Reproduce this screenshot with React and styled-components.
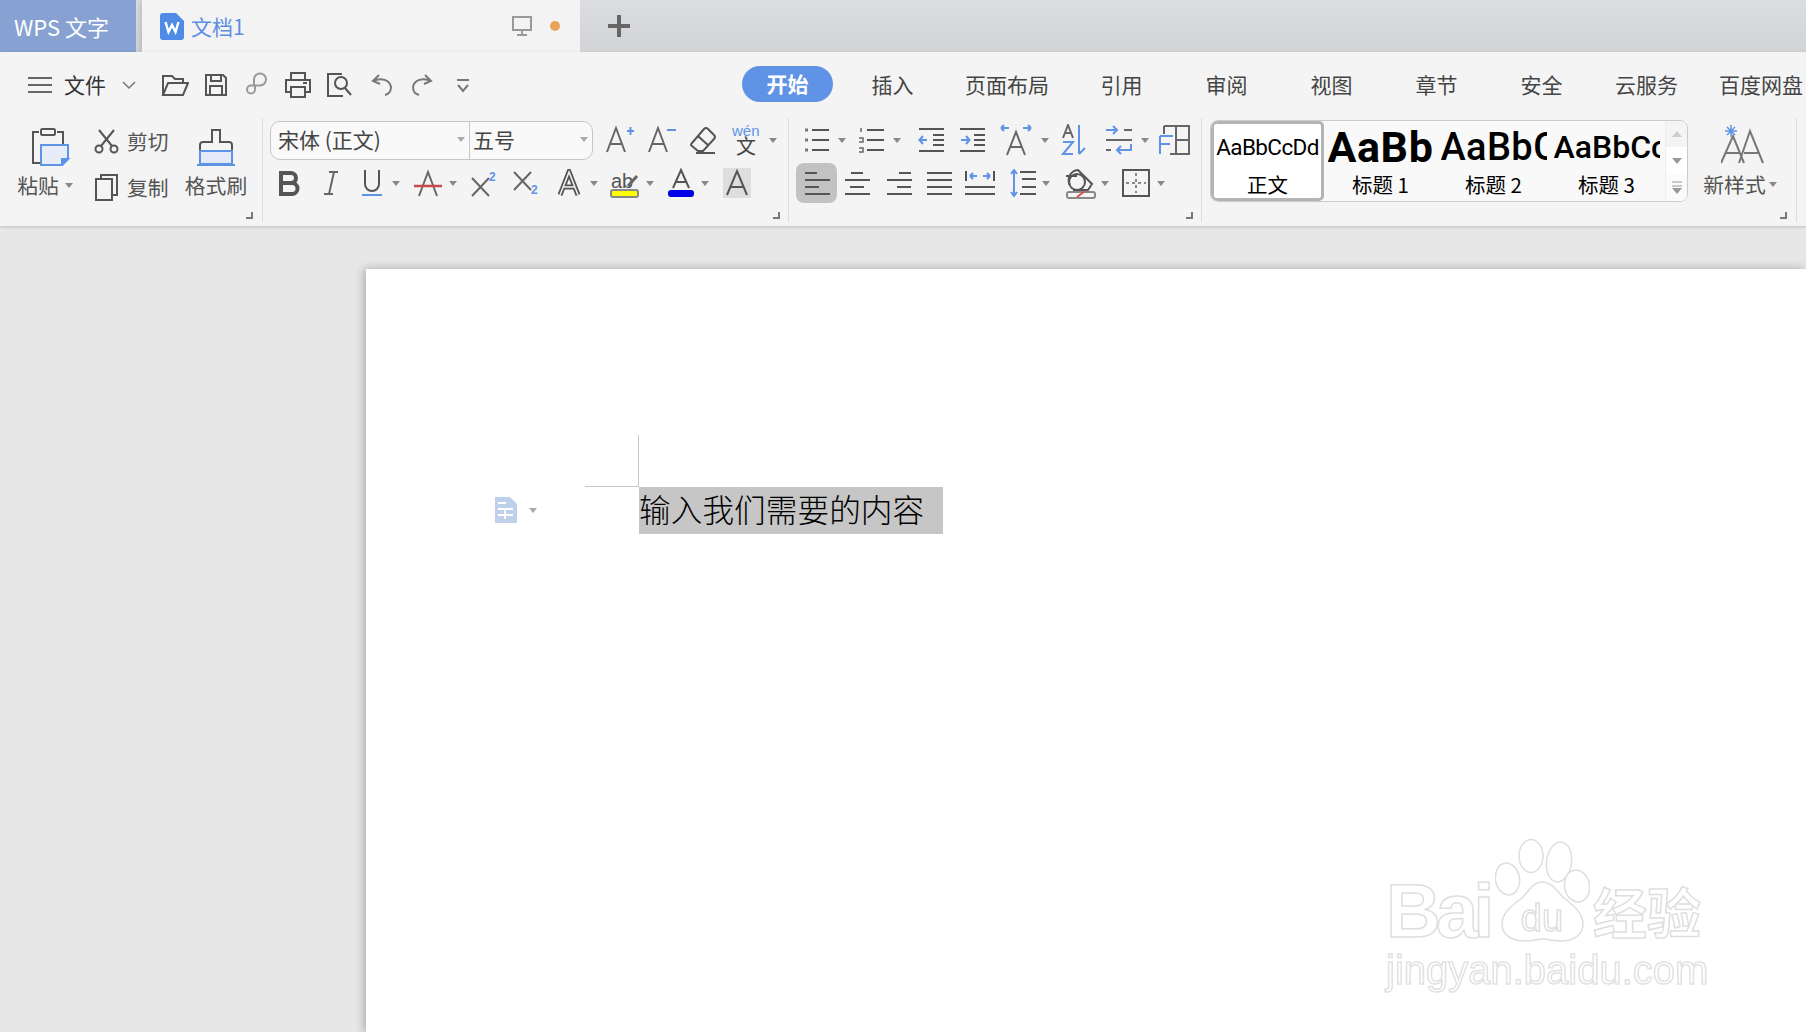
import React from 'react'
import styled, { createGlobalStyle } from 'styled-components'

const BLUE = '#5f93e6'
const CJK = '"Noto Sans CJK SC", "Noto Sans", sans-serif'

const GlobalStyle = createGlobalStyle`
  html, body { margin:0; height:100%; overflow:hidden; }
  #root { height:100%; }
  body { font-family:${CJK}; color:#444; }
`

const Shell = styled.div`
  height:100vh; display:flex; flex-direction:column; overflow:hidden;
`

/* title bar */
const TitleBar = styled.div`
  height:52px; flex:none; display:flex; align-items:stretch;
  background:linear-gradient(#dcdde0, #d2d3d5);
`
const AppTab = styled.div`
  width:136px; flex:none; display:flex; align-items:center; padding-left:14px; box-sizing:border-box;
  background:#87a2d2; color:#fff; font-size:22px; white-space:nowrap;
`
const DocTab = styled.div`
  width:438px; flex:none; margin-left:6px; display:flex; align-items:center; box-sizing:border-box;
  padding:0 20px 0 18px; background:#f3f3f3; box-shadow:-3px 0 4px rgba(0,0,0,.1);
`
const DocName = styled.span`
  color:#5b8ee6; font-size:21px; margin-left:7px; flex:1;
`
const UnsavedDot = styled.span`
  width:10px; height:10px; border-radius:50%; background:#e8a35c; margin-left:18px;
`
const NewTab = styled.div`
  margin-left:28px; display:flex; align-items:center;
`

/* ribbon */
const Ribbon = styled.div`
  height:174px; flex:none; display:flex; flex-direction:column; background:#f4f4f4;
  box-shadow:0 1px 3px rgba(0,0,0,.18); position:relative; z-index:1;
`
const MenuRow = styled.div`
  height:66px; flex:none; display:flex; align-items:center;
`
const QuickBar = styled.div`
  width:735px; flex:none; display:flex; align-items:center; padding-left:22px; box-sizing:border-box;
`
const QuickCell = styled.div`
  width:${p => p.$w}px; flex:none; display:flex; align-items:center; justify-content:center;
  margin-right:${p => p.$mr || 0}px;
`
const FileLabel = styled.span`
  font-size:21px; color:#333; width:50px; margin-left:2px; padding-bottom:2px; text-align:center; flex:none;
`
const TabCell = styled.div`
  min-width:105px; padding:0 20px 2px; box-sizing:border-box; flex:none; display:flex; justify-content:center;
  font-size:21px; color:#444; white-space:nowrap;
`
const ActivePill = styled.span`
  width:91px; height:36px; flex:none; margin:0 -13px; border-radius:18px; background:${BLUE}; color:#fff; font-weight:700;
  display:flex; align-items:center; justify-content:center; padding-bottom:2px; box-sizing:border-box;
`
const ToolRow = styled.div`
  height:104px; flex:none; display:flex;
`
const Group = styled.div`
  width:${p => p.$w}px; flex:none; box-sizing:border-box; display:flex; padding-left:${p => p.$pad || 0}px;
  border-right:1px solid #dcdcdc;
`
const Launcher = styled.i`
  display:block; width:7px; height:7px; flex:none; box-sizing:border-box; align-self:flex-end;
  margin-left:auto; margin-right:${p => p.$mr}px; margin-bottom:3px;
  border-right:2px solid #777; border-bottom:2px solid #777;
`
const BigButton = styled.div`
  width:${p => p.$w}px; flex:none; display:flex; flex-direction:column; align-items:center; padding-top:6px; box-sizing:border-box;
  margin-right:${p => p.$mr || 0}px;
`
const BigIconSlot = styled.div`
  height:46px; display:flex; align-items:center; justify-content:center; margin-left:${p => p.$ml || 0}px;
`
const BigLabel = styled.span`
  font-size:20.8px; color:#555; display:flex; align-items:center; white-space:nowrap; line-height:30px;
  margin-top:${p => p.$mt || 0}px;
`
const MiniStack = styled.div`
  width:${p => p.$w}px; flex:none; margin-left:18px; display:flex; flex-direction:column; gap:6px; padding-top:3px; box-sizing:border-box;
`
const MiniRow = styled.div`
  height:40px; display:flex; align-items:center; gap:8px;
  font-size:20.8px; color:#555; white-space:nowrap;
`
const Stack = styled.div`
  display:flex; flex-direction:column; gap:3px; padding-top:2px; margin-right:-30px;
`
const Row = styled.div`
  height:40px; display:flex; align-items:center;
`
const Tool = styled.div`
  width:${p => p.$w}px; height:40px; flex:none; display:flex; align-items:center; justify-content:center;
  margin-left:${p => p.$ml || 0}px; border-radius:8px;
  background:${p => (p.$active ? '#c2c2c2' : 'transparent')};
`
const Caret = styled.span`
  width:${p => p.$w || 8}px; flex:none; display:flex; align-items:center; margin-left:${p => p.$ml || 0}px;
  &::before { content:''; border-top:5px solid ${p => p.$light ? '#aaa' : '#888'}; border-left:4px solid transparent; border-right:4px solid transparent; }
`
const ComboBox = styled.div`
  width:323px; height:39px; flex:none; box-sizing:border-box; margin:0 5px 0 2px; display:flex;
  border:1px solid #c6c6c6; border-radius:10px; background:#f9f9f9; font-size:21px; line-height:30px; color:#444;
`
const ComboField = styled.div`
  width:${p => p.$w}px; flex:none; box-sizing:border-box; display:flex; align-items:center; justify-content:space-between;
  padding:0 4px 2px ${p => p.$pl}px; border-right:${p => (p.$divided ? '1px solid #c6c6c6' : 'none')}; white-space:nowrap;
`

/* style gallery */
const Gallery = styled.div`
  width:478px; height:82px; flex:none; margin:2px 0 0 8px; box-sizing:border-box; display:flex;
  border:1px solid #cbcbcb; border-radius:8px; background:#f9f9f9; overflow:hidden;
`
const StyleItem = styled.div`
  width:113px; flex:none; box-sizing:border-box; display:flex; flex-direction:column; align-items:center; overflow:hidden;
  border:3px solid ${p => (p.$active ? '#b4b4b4' : 'transparent')}; border-radius:5px; background:${p => (p.$active ? '#fff' : 'transparent')};
  color:#000;
`
const StyleSample = styled.div`
  height:46px; width:106px; flex:none; overflow:hidden; white-space:nowrap; display:flex; align-items:center;
  justify-content:${p => (p.$center ? 'center' : 'flex-start')};
  font-family:Roboto, sans-serif; font-size:${p => p.$size}px; font-weight:${p => p.$weight || 400}; letter-spacing:${p => p.$ls || 0}px;
`
const StyleLabel = styled.span`
  font-size:20.5px; line-height:28px; white-space:nowrap;
`
const Scroller = styled.div`
  width:21px; flex:none; margin-left:auto; display:flex; flex-direction:column; gap:1px; background:#fff; border-left:1px solid #eee;
`
const ScrollBtn = styled.div`
  flex:1; display:flex; align-items:center; justify-content:center; background:${p => p.$bg || '#fafafa'};
`
const NewStyle = styled.div`
  width:64px; flex:none; margin-left:20px; display:flex; flex-direction:column; align-items:center; padding-top:5px;
`
const NewStyleArt = styled.div`
  margin-left:8px;
`

/* document */
const Canvas = styled.div`
  flex:1; min-height:0; display:flex; background:#e7e7e7; padding:43px 0 0 366px; overflow:hidden;
`
const Page = styled.div`
  flex:1; background:#fff; box-shadow:-2px 0 9px rgba(0,0,0,.28); position:relative; padding:218px 0 0 273px;
`
const Paragraph = styled.div`
  width:304px; height:47px; box-sizing:border-box; padding-bottom:6px; background:#c6c6c6; position:relative; display:flex; align-items:center;
  font-size:31.6px; font-weight:300; letter-spacing:.1px; color:#000; white-space:nowrap;
  &::before { content:''; position:absolute; left:-1px; bottom:100%; width:1px; height:52px; background:#c8c8c8; }
  &::after { content:''; position:absolute; right:100%; top:-1px; width:54px; height:1px; background:#c8c8c8; }
`
const ParaMark = styled.div`
  position:absolute; left:-144px; top:10px; display:flex; align-items:center; gap:12px;
`
const Watermark = styled.div`
  position:absolute; left:1020px; top:570px; width:330px; display:flex; flex-direction:column; filter:blur(.5px);
`
const MarkTop = styled.div`
  display:flex; align-items:flex-end; height:103px;
`
const MarkBai = styled.span`
  font-family:"Liberation Sans", sans-serif; font-weight:700; font-size:76px; line-height:62px; letter-spacing:-5px;
  color:#fff; -webkit-text-stroke:1.5px #dedede; width:109px; flex:none;
`
const MarkCn = styled.span`
  font-weight:700; font-size:54px; line-height:62px; color:#fff; -webkit-text-stroke:1.5px #dedede; margin-left:3px; white-space:nowrap;
`
const MarkUrl = styled.span`
  font-family:"Liberation Sans", sans-serif; font-size:40px; line-height:50px; margin-top:3px; color:#fff; -webkit-text-stroke:1.5px #e2e2e2; white-space:nowrap;
`

/* icons */
const Ico = styled.svg`
  display:block; flex:none; fill:none; stroke:${p => p.$c || '#555'}; stroke-width:${p => p.$sw || 2};
  text { stroke:none; font-family:"Liberation Sans", sans-serif; }
`
const I = ({ w = 26, h, c, sw, children }) => (
  <Ico width={w} height={h || w} viewBox={`0 0 ${w} ${h || w}`} $c={c} $sw={sw}>{children}</Ico>
)
const LetterA = 'M3 27 L12 3 L21 27 M6.5 19 H17.5'

const Hamburger = () => <I w={24} h={18} c="#666"><path d="M0 2h24M0 9h24M0 16h24" /></I>
const Chevron = () => <I w={14} h={10} c="#777" sw={1.5}><path d="M1 2l6 6 6-6" /></I>
const OpenIcon = () => <I w={28} h={24} c="#555"><path d="M2 22V3h9l3 3h8v4M2 22h20l5-12H7L2 22z" /></I>
const SaveIcon = () => <I w={24} h={24} c="#555"><path d="M2 2h17l3 3v17H2zM7 2v6h10V2M6 22v-9h12v9" /></I>
const SaveAsIcon = () => <I w={24} h={26} c="#999"><path d="M9 13V7.5a6 6 0 1 1 6 6H6a4 4 0 1 0 4 4V13" /></I>
const PrintIcon = () => <I w={28} h={28} c="#555"><path d="M7 9V2h14v7M7 21H2V9h24v12h-5M7 16h14v10H7zM19 12h4" /></I>
const PreviewIcon = () => <I w={28} h={26} c="#555"><path d="M16 2H2v22h15" /><circle cx="15" cy="11" r="6" /><path d="M19 16l6 7" /></I>
const UndoIcon = () => <I w={24} h={24} c="#777"><path d="M9 2L3 8l7 3M3 8c8-4 17-1 18 6 0 4-2 7-6 8" /></I>
const RedoIcon = () => <I w={24} h={24} c="#777"><path d="M15 2l6 6-7 3M21 8c-8-4-17-1-18 6 0 4 2 7 6 8" /></I>
const MoreIcon = () => <I w={16} h={15} c="#777"><path d="M2 2h12M3 7l5 6 5-6" /></I>

const PasteIcon = () => (
  <I w={40} h={38}>
    <path d="M8 4H2v31h8M26 4h6v12" />
    <rect x="10" y="1" width="14" height="6" rx="1.5" />
    <path d="M10 17h27v14l-6 6H10z" fill="#e6ecf8" stroke={BLUE} />
    <path d="M31 37v-6h6z" fill={BLUE} stroke={BLUE} />
  </I>
)
const ScissorsIcon = () => (
  <I w={25} h={25}><circle cx="5" cy="20" r="3.5" /><circle cx="20" cy="20" r="3.5" /><path d="M7 17L20 1M18 17L5 1" /></I>
)
const CopyIcon = () => <I w={25} h={28}><path d="M7 6V2h16v20h-5M2 6h16v21H2z" /></I>
const BrushIcon = () => (
  <I w={38} h={38}>
    <path d="M15 2h8v12h9a3 3 0 0 1 3 3v6H3v-6a3 3 0 0 1 3-3h9z" />
    <path d="M3 23h32v13H3z" fill="#e3e9f6" stroke={BLUE} />
    <path d="M0 37h38" stroke={BLUE} />
  </I>
)
const DocIcon = () => (
  <I w={24} h={27} c="none">
    <path d="M3 0h13l8 8v16a3 3 0 0 1-3 3H3a3 3 0 0 1-3-3V3a3 3 0 0 1 3-3z" fill="#4f8ae6" />
    <path d="M5.500 9l3 10 3.500-7 3.500 7 3-10" stroke="#fff" strokeWidth="2.400" />
  </I>
)
const MonitorIcon = () => <I w={20} h={20} c="#999"><path d="M1 1h18v13H1zM10 14v4M5 19h10" /></I>
const PlusIcon = () => <I w={22} h={22} c="#666" sw={4}><path d="M11 0v22M0 11h22" /></I>

const BoldIcon = () => <I w={22} h={26} sw={4}><path d="M3 3h10a5 5 0 0 1 0 10H3zM3 13h11a5.5 5.5 0 0 1 0 11H3z" /></I>
const ItalicIcon = () => <I w={20} h={26} c="#666"><path d="M8 2h9M13 2L8 24M3 24h9" /></I>
const UnderlineIcon = () => <I w={24} h={28}><path d="M5 1v14a7 7 0 0 0 14 0V1" /><path d="M2 26h20" stroke={BLUE} /></I>
const StrikeIcon = () => <I w={28} h={28} c="#666"><path d="M5 27L14 3l9 24" /><path d="M0 17h28" stroke="#c94a4a" strokeWidth="2.5" /></I>
const SupIcon = () => <I w={28} h={28} c="#666"><path d="M2 9l17 18M19 9L2 27" /><text x="19" y="12" fontSize="12" fontWeight="700" fill={BLUE}>2</text></I>
const SubIcon = () => <I w={28} h={28} c="#666"><path d="M2 3l17 18M19 3L2 21" /><text x="19" y="25" fontSize="12" fontWeight="700" fill={BLUE}>2</text></I>
const OutlineAIcon = () => (
  <I w={26} h={28}><path d="M4 26L13 3l9 23M7 18h12" strokeWidth="5" /><path d="M4 26L13 3l9 23M7 18h12" stroke="#f4f4f4" strokeWidth="1.5" /></I>
)
const HighlightIcon = () => (
  <I w={30} h={30} c="#666">
    <text x="1" y="20" fontSize="20" fill="#555">ab</text>
    <path d="M18 18L27 8" strokeWidth="3" />
    <rect x="1" y="22" width="27" height="7" rx="2" fill="#ff0" stroke="#888" />
  </I>
)
const FontColorIcon = () => (
  <I w={26} h={30} c="#555"><path d="M5 20L13 2l8 18M8 14h10" /><rect x="1" y="23" width="24" height="5" rx="2" fill="#0000e6" stroke="#0000e6" /></I>
)
const ShadeIcon = () => (
  <I w={30} h={32} c="#555"><rect x="1" y="1" width="28" height="30" fill="#dedede" stroke="none" /><path d="M5 28L15 4l10 24M8 20h14" /></I>
)
const GrowIcon = () => <I w={30} h={30} c="#666"><path d={LetterA} /><path d="M23 6h7M26.500 2v8" stroke={BLUE} /></I>
const ShrinkIcon = () => <I w={30} h={30} c="#666"><path d={LetterA} /><path d="M21 5h9" stroke={BLUE} /></I>
const EraserIcon = () => <I w={28} h={30} c="#555"><path d="M3 18L15 4q2-2 4 0l6 6q2 2 0 4L14 26H9l-6-5q-2-1 0-3zM9 11l11 10M7 28h19" /></I>
const WenIcon = () => (
  <I w={34} h={36} c="none">
    <text x="3" y="14" fontSize="15" fill={BLUE}>wén</text>
    <text x="7" y="32" fontSize="20" fill="#444" style={{ fontFamily: CJK }}>文</text>
  </I>
)
const Bullets = () => (
  <I w={26} h={28}><path d="M9 4h17M9 14h17M9 24h17" /><path d="M2 4h3M2 14h3M2 24h3" strokeWidth="3" stroke="#777" /></I>
)
const Numbered = () => (
  <I w={26} h={28}><path d="M9 4h17M9 14h17M9 24h17" /><path d="M3 2v4M1 12h4v4H1M1 22h4v4H1" strokeWidth="1.5" stroke="#666" /></I>
)
const Outdent = () => <I w={26} h={28}><path d="M1 3h25M15 14h11M1 25h25M15 9h11M15 19h11" /><path d="M9 14H2M5 10l-3.500 4 3.500 4" stroke={BLUE} /></I>
const Indent = () => <I w={26} h={28}><path d="M1 3h25M15 14h11M1 25h25M15 9h11M15 19h11" /><path d="M2 14h8M7 10l3.500 4-3.500 4" stroke={BLUE} /></I>
const WideA = () => (
  <I w={32} h={32} c="#666"><path d="M7 31L16 8l9 23M10 23h12" /><path d="M1 4h8M1 4l3-3M1 4l3 3M31 4h-8M31 4l-3-3M31 4l-3 3" stroke={BLUE} /></I>
)
const SortIcon = () => (
  <I w={28} h={32} c="#666">
    <path d="M2 14L7 1l5 13M4 9h6" /><path d="M2 18h10L2 30h10" stroke={BLUE} /><path d="M18 1v29M18 30l6-6" stroke={BLUE} />
  </I>
)
const SwapIcon = () => (
  <I w={30} h={30} c="#666">
    <path d="M20 5h8M2 15h26M2 25h5" /><path d="M2 5h11M9 1l4 4-4 4" stroke={BLUE} /><path d="M27 19v6H13M17 21l-4 4 4 4" stroke={BLUE} />
  </I>
)
const TableMix = () => (
  <I w={32} h={32} c="#666"><path d="M5 2h25v28H11M17 2v28M17 16h13M5 2v8" /><path d="M1 12v18M1 12h13M1 20h10" stroke={BLUE} /></I>
)
const AlignLeft = () => <I w={26} h={26}><path d="M1 3h12M1 10h25M1 17h14M1 24h25" /></I>
const AlignCenter = () => <I w={26} h={26}><path d="M7 3h12M1 10h25M6 17h14M1 24h25" /></I>
const AlignRight = () => <I w={26} h={26}><path d="M13 3h12M1 10h25M11 17h14M1 24h25" /></I>
const Justify = () => <I w={26} h={26}><path d="M1 3h25M1 10h25M1 17h25M1 24h25" /></I>
const Distributed = () => (
  <I w={30} h={26}><path d="M1 1v10M29 1v10M0 17h30M0 24h30" /><path d="M5 6h7M5 6l3-3M5 6l3 3M25 6h-7M25 6l-3-3M25 6l-3 3" stroke={BLUE} /></I>
)
const LineSpacing = () => (
  <I w={26} h={28}><path d="M10 3h16M12 10h14M12 18h14M10 25h16" /><path d="M4 1v26M1 5l3-4 3 4M1 23l3 4 3-4" stroke={BLUE} /></I>
)
const FillIcon = () => (
  <I w={32} h={32}>
    <path d="M1 9h11M5 18a10 10 0 0 1 8-15l14 14-4 6H8" /><circle cx="12" cy="15" r="8" />
    <rect x="2" y="25" width="28" height="6" rx="2" stroke="#888" /><path d="M12 30l8-6" stroke="#d9534f" />
  </I>
)
const BorderIcon = () => <I w={28} h={28}><rect x="1" y="1" width="26" height="26" /><path d="M14 4v20M4 14h20" strokeDasharray="3 3" stroke="#888" /></I>
const NewStyleIcon = () => (
  <I w={46} h={42} c="#777">
    <path d="M0 40L12 13l11 27M4 30h15M18 40L29 8l13 32M23 30h15" />
    <path d="M10 2v12M4 8h12M6 4l8 8M14 4l-8 8" stroke={BLUE} strokeWidth="1.500" />
  </I>
)
const ParaIcon = () => (
  <I w={22} h={26} c="none"><path d="M0 0h15l7 7v19H0z" fill="#bfd0ea" /><path d="M3 6h8M3 12h15M3 18h15M10 12v10" stroke="#fff" /></I>
)
const ScrollArrow = ({ up }) => <I w={12} h={8} c="none"><path d={up ? 'M6 1l5 6H1z' : 'M6 7l5-6H1z'} fill={up ? '#ccc' : '#999'} /></I>
const ScrollMore = () => <I w={12} h={14} c="#999" sw={1}><path d="M1 1h10M1 5h10" /><path d="M6 13l5-6H1z" fill="#999" stroke="none" /></I>
const Paw = () => (
  <I w={95} h={103} c="#dedede" sw={1.5}>
    <ellipse cx="12.500" cy="40" rx="12" ry="16" transform="rotate(-10 12.5 40)" fill="#fff" />
    <ellipse cx="36" cy="17" rx="12" ry="16.500" fill="#fff" />
    <ellipse cx="64" cy="23" rx="12.500" ry="20" transform="rotate(8 64 23)" fill="#fff" />
    <ellipse cx="82" cy="47" rx="12.500" ry="16" transform="rotate(-10 82 47)" fill="#fff" />
    <path d="M47 43C38 43 34 52 28 58 18 66 7 73 7 85c0 12 11 17 23 17 8 0 12-2 18-2s10 2 18 2c12 0 22-6 22-17 0-11-10-19-20-27-6-6-11-15-21-15z" fill="#fff" />
    <text x="47" y="92" textAnchor="middle" fontSize="38" fill="#fff" style={{ stroke: '#dedede' }}>du</text>
  </I>
)

const tabs = ['插入', '页面布局', '引用', '审阅', '视图', '章节', '安全', '云服务', '百度网盘']

export default function App() {
  return (
    <Shell>
      <GlobalStyle />
      <TitleBar>
        <AppTab>WPS 文字</AppTab>
        <DocTab>
          <DocIcon />
          <DocName>文档1</DocName>
          <MonitorIcon />
          <UnsavedDot />
        </DocTab>
        <NewTab><PlusIcon /></NewTab>
      </TitleBar>

      <Ribbon>
        <MenuRow>
          <QuickBar>
            <QuickCell $w={36}><Hamburger /></QuickCell>
            <FileLabel>文件</FileLabel>
            <QuickCell $w={38} $mr={6}><Chevron /></QuickCell>
            <QuickCell $w={41}><OpenIcon /></QuickCell>
            <QuickCell $w={41}><SaveIcon /></QuickCell>
            <QuickCell $w={41}><SaveAsIcon /></QuickCell>
            <QuickCell $w={41}><PrintIcon /></QuickCell>
            <QuickCell $w={43}><PreviewIcon /></QuickCell>
            <QuickCell $w={41}><UndoIcon /></QuickCell>
            <QuickCell $w={39}><RedoIcon /></QuickCell>
            <QuickCell $w={43}><MoreIcon /></QuickCell>
          </QuickBar>
          <TabCell><ActivePill>开始</ActivePill></TabCell>
          {tabs.map(t => <TabCell key={t}>{t}</TabCell>)}
        </MenuRow>

        <ToolRow>
          <Group $w={263} $pad={14}>
            <BigButton $w={62}>
              <BigIconSlot $ml={12}><PasteIcon /></BigIconSlot>
              <BigLabel>粘贴<Caret $w={8} $ml={6} /></BigLabel>
            </BigButton>
            <MiniStack $w={86}>
              <MiniRow><ScissorsIcon />剪切</MiniRow>
              <MiniRow><CopyIcon />复制</MiniRow>
            </MiniStack>
            <BigButton $w={72} $mr={-6}>
              <BigIconSlot><BrushIcon /></BigIconSlot>
              <BigLabel>格式刷</BigLabel>
            </BigButton>
            <Launcher $mr={9} />
          </Group>

          <Group $w={526} $pad={5}>
            <Stack>
              <Row>
                <ComboBox>
                  <ComboField $w={199} $pl={7} $divided>宋体 (正文)<Caret $light /></ComboField>
                  <ComboField $w={122} $pl={3}>五号<Caret $light /></ComboField>
                </ComboBox>
                <Tool $w={42}><GrowIcon /></Tool>
                <Tool $w={42}><ShrinkIcon /></Tool>
                <Tool $w={42}><EraserIcon /></Tool>
                <Tool $w={44}><WenIcon /></Tool>
                <Caret $ml={1} />
              </Row>
              <Row>
                <Tool $w={42}><BoldIcon /></Tool>
                <Tool $w={42}><ItalicIcon /></Tool>
                <Tool $w={40}><UnderlineIcon /></Tool>
                <Caret $w={14} />
                <Tool $w={43}><StrikeIcon /></Tool>
                <Caret $w={15} />
                <Tool $w={40}><SupIcon /></Tool>
                <Tool $w={44}><SubIcon /></Tool>
                <Tool $w={42}><OutlineAIcon /></Tool>
                <Caret $w={14} />
                <Tool $w={42}><HighlightIcon /></Tool>
                <Caret $w={15} />
                <Tool $w={40}><FontColorIcon /></Tool>
                <Caret $w={15} />
                <Tool $w={42}><ShadeIcon /></Tool>
              </Row>
            </Stack>
            <Launcher $mr={8} />
          </Group>

          <Group $w={413} $pad={5}>
            <Stack>
              <Row>
                <Tool $w={44}><Bullets /></Tool>
                <Caret $w={11} />
                <Tool $w={44}><Numbered /></Tool>
                <Caret $w={16} />
                <Tool $w={44}><Outdent /></Tool>
                <Tool $w={38}><Indent /></Tool>
                <Tool $w={50}><WideA /></Tool>
                <Caret $w={12} />
                <Tool $w={44}><SortIcon /></Tool>
                <Tool $w={44}><SwapIcon /></Tool>
                <Caret $w={12} />
                <Tool $w={44}><TableMix /></Tool>
              </Row>
              <Row>
                <Tool $w={41} $ml={2} $active><AlignLeft /></Tool>
                <Tool $w={40}><AlignCenter /></Tool>
                <Tool $w={44}><AlignRight /></Tool>
                <Tool $w={36}><Justify /></Tool>
                <Tool $w={46}><Distributed /></Tool>
                <Tool $w={39}><LineSpacing /></Tool>
                <Caret $w={18} />
                <Tool $w={41}><FillIcon /></Tool>
                <Caret $w={15} />
                <Tool $w={40}><BorderIcon /></Tool>
                <Caret $ml={1} />
              </Row>
            </Stack>
            <Launcher $mr={8} />
          </Group>

          <Group $w={595}>
            <Gallery>
              <StyleItem $active>
                <StyleSample $size={22.5} $ls={-.6} $center>AaBbCcDd</StyleSample>
                <StyleLabel>正文</StyleLabel>
              </StyleItem>
              <StyleItem>
                <StyleSample $size={43} $weight={700} $ls={.6}>AaBb</StyleSample>
                <StyleLabel>标题 1</StyleLabel>
              </StyleItem>
              <StyleItem>
                <StyleSample $size={38} $weight={500} $ls={.4}>AaBbC</StyleSample>
                <StyleLabel>标题 2</StyleLabel>
              </StyleItem>
              <StyleItem>
                <StyleSample $size={32} $weight={500}>AaBbCc</StyleSample>
                <StyleLabel>标题 3</StyleLabel>
              </StyleItem>
              <Scroller>
                <ScrollBtn $bg="#f4f4f4"><ScrollArrow up /></ScrollBtn>
                <ScrollBtn $bg="#fff"><ScrollArrow /></ScrollBtn>
                <ScrollBtn $bg="#fafafa"><ScrollMore /></ScrollBtn>
              </Scroller>
            </Gallery>
            <NewStyle>
              <NewStyleArt><NewStyleIcon /></NewStyleArt>
              <BigLabel $mt={4}>新样式<Caret $w={8} $ml={3} /></BigLabel>
            </NewStyle>
            <Launcher $mr={9} />
          </Group>
        </ToolRow>
      </Ribbon>

      <Canvas>
        <Page>
          <Paragraph>
            <ParaMark><ParaIcon /><Caret $light /></ParaMark>
            输入我们需要的内容
          </Paragraph>
          <Watermark>
            <MarkTop>
              <MarkBai>Bai</MarkBai>
              <Paw />
              <MarkCn>经验</MarkCn>
            </MarkTop>
            <MarkUrl>jingyan.baidu.com</MarkUrl>
          </Watermark>
        </Page>
      </Canvas>
    </Shell>
  )
}
